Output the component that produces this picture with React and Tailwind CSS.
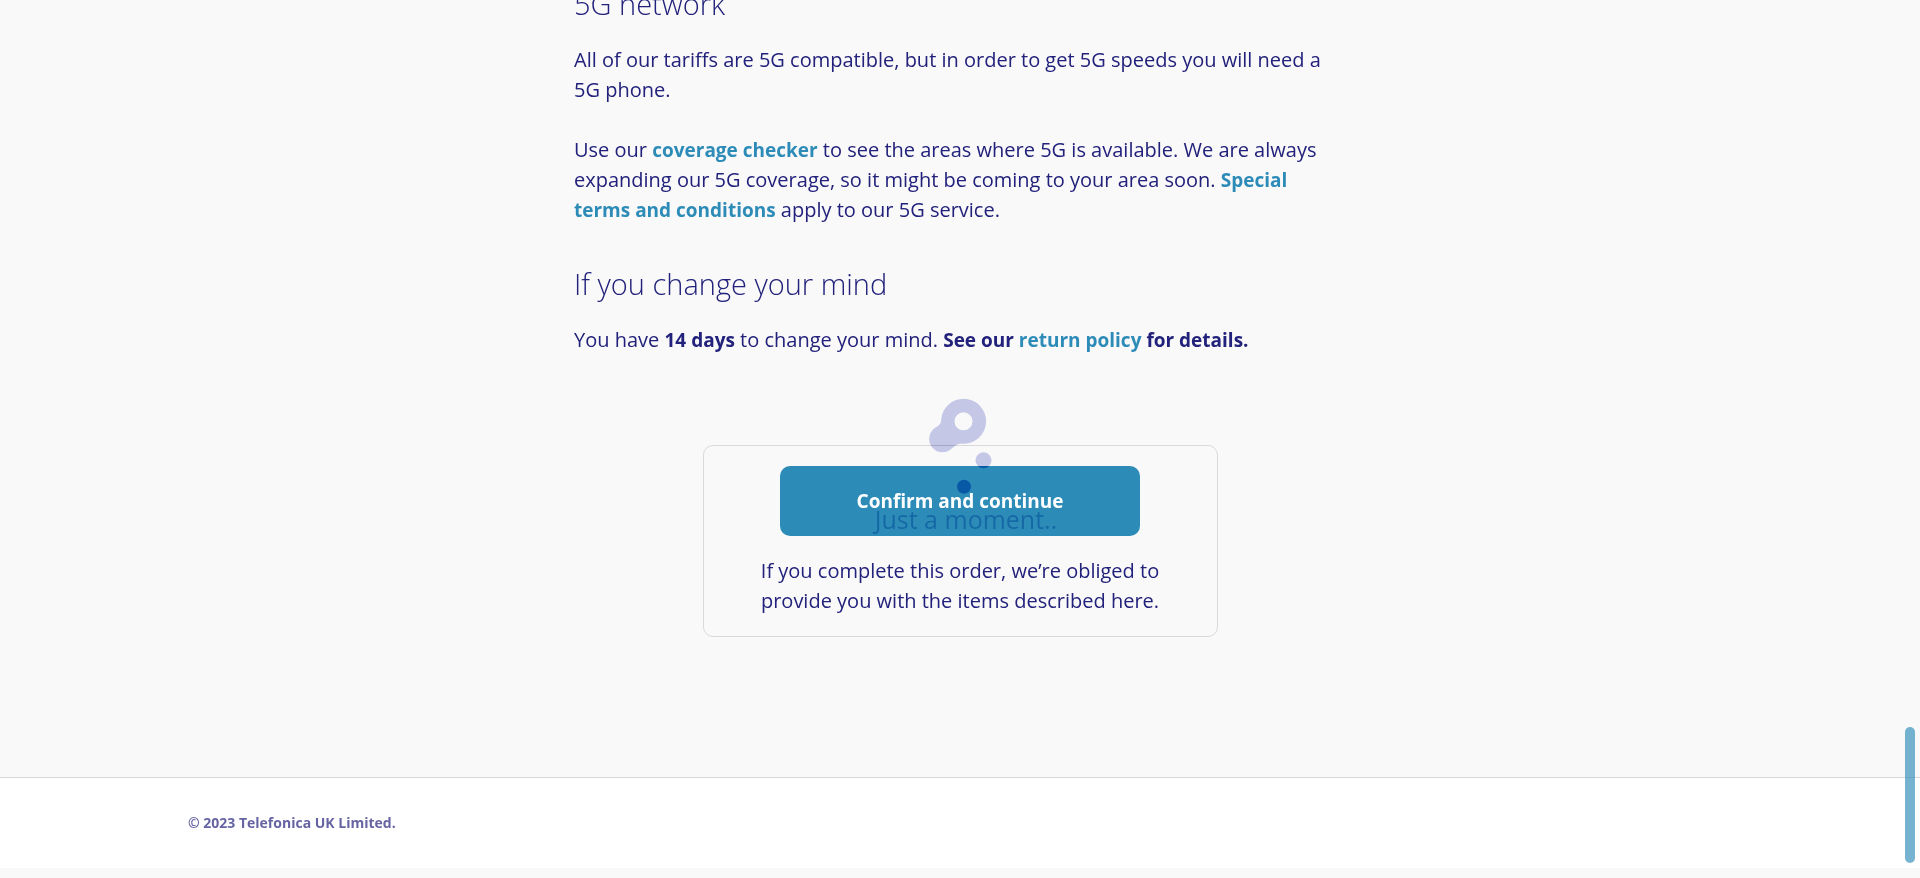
function Heading({ children }) {
  return <h2 className="mb-5 text-[29px] leading-[42px] font-light">{children}</h2>;
}

function TextLink({ children }) {
  return (
    <a href="#" className="text-[19px] font-bold text-[#2d8bb8] hover:underline">
      {children}
    </a>
  );
}

function Loader() {
  return (
    <div
      role="status"
      className="pointer-events-none absolute inset-x-0 -top-[49px] flex flex-col items-center mix-blend-difference"
    >
      <svg viewBox="0 0 60 100" className="h-[100px] w-[60px] overflow-visible" fill="#353213" aria-hidden="true">
        <path
          fillRule="evenodd"
          d="M33.5 1.8A22.500 22.500 0 1 1 31.500 46.700C27 46.700 25.500 48.500 22 51.300A13.300 13.300 0 1 1 4.200 31.600C8 28.500 11 28.500 11.200 22.300A22.500 22.500 0 0 1 33.500 1.800ZM33.500 15.300A9 9 0 1 0 33.500 33.300A9 9 0 1 0 33.500 15.300Z"
        />
        <circle cx="53.500" cy="63.300" r="8" />
        <circle cx="34" cy="89.700" r="7" />
      </svg>
      <span className="pt-1 pl-3 text-[25px] leading-9 text-[#192313]">Just a moment..</span>
    </div>
  );
}

export default function App() {
  return (
    <div className="min-h-screen overflow-hidden bg-[#f9f9f9] font-['Open_Sans',sans-serif] text-xl leading-[30px] text-[#22217b]">
      <main className="mx-auto -mt-[17px] max-w-[772px] pb-[140px]">
        <section className="pr-2 pb-[38px]">
          <Heading>5G network</Heading>
          <p className="mb-[30px]">
            All of our tariffs are 5G compatible, but in order to get 5G speeds you will need a 5G phone.
          </p>
          <p>
            Use our <TextLink>coverage checker</TextLink> to see the areas where 5G is available. We are always
            expanding our 5G coverage, so it might be coming to your area soon.{" "}
            <TextLink>Special terms and conditions</TextLink> apply to our 5G service.
          </p>
        </section>
        <section>
          <Heading>If you change your mind</Heading>
          <p>
            You have <strong className="text-[19px] font-bold">14 days</strong> to change your mind.{" "}
            <strong className="text-[19px] font-bold">
              See our <TextLink>return policy</TextLink> for details.
            </strong>
          </p>
        </section>
        <div className="relative mx-auto mt-[90px] flex max-w-[515px] flex-col items-center rounded-[10px] border border-[#d9d9db] p-5 text-center">
          <button type="button" className="h-[70px] w-[360px] max-w-full rounded-[10px] bg-[#2d8bb8] text-[19px] font-bold text-white">
            Confirm and continue
          </button>
          <p className="mt-5 max-w-[430px]">
            If you complete this order, we’re obliged to provide you with the items described here.
          </p>
          <Loader />
        </div>
      </main>
      <footer className="mb-[10px] border-t border-[#d9d9db] bg-white py-[30px]">
        <p className="mx-auto max-w-[1544px] text-sm leading-[30px] font-bold text-[#6664a3]">
          © 2023 Telefonica UK Limited.
        </p>
      </footer>
      <div className="fixed right-[5px] bottom-[15px] h-[136px] w-[10px] rounded-full bg-[#2d8bb8]/65" />
    </div>
  );
}
